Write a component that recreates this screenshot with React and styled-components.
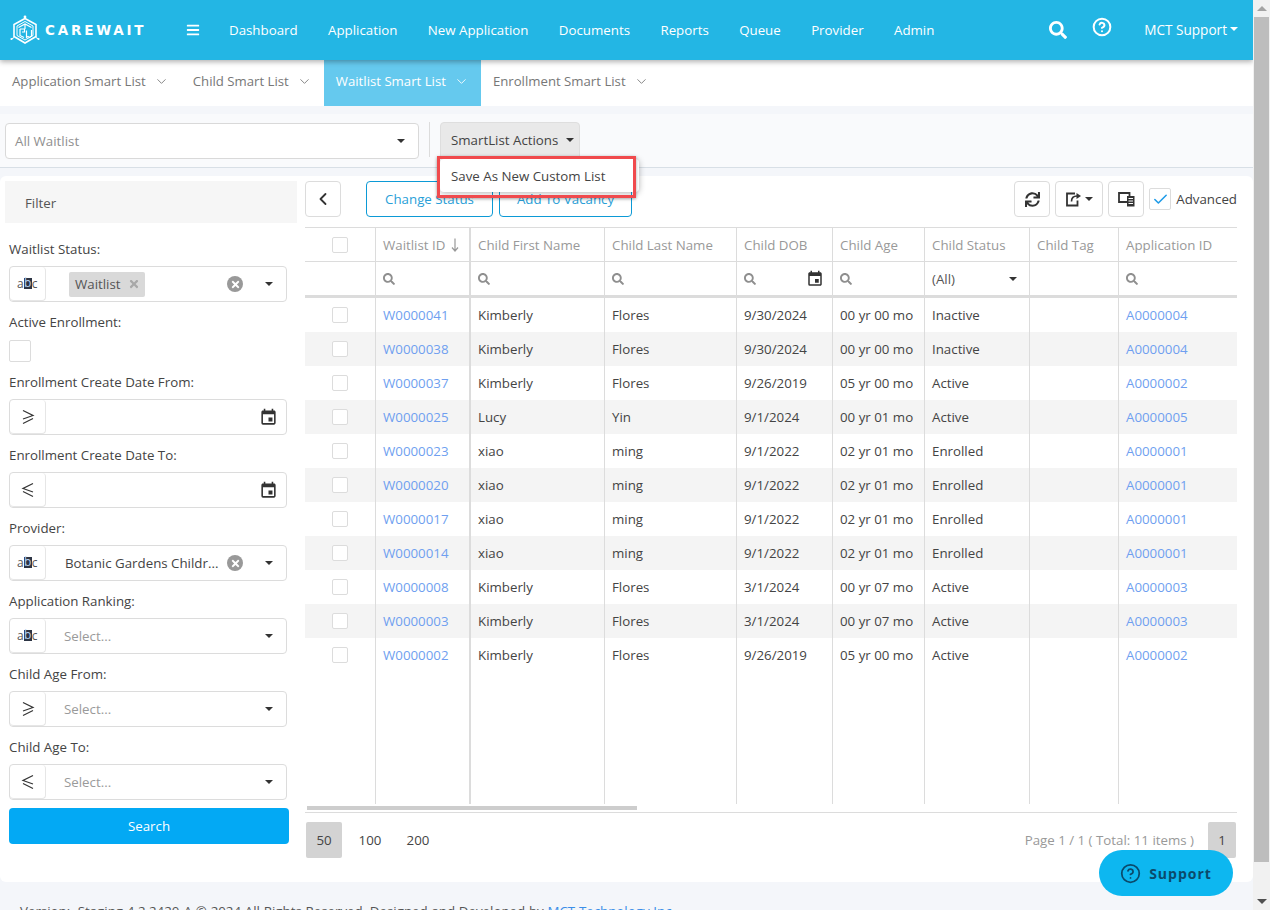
import React from 'react';
import styled, { createGlobalStyle } from 'styled-components';
import { ChevronDown, ChevronLeft, CircleHelp, Check } from 'lucide-react';
import { FaBars, FaSearch, FaSync, FaTimes } from 'react-icons/fa';
import { MdEvent } from 'react-icons/md';

const FONT = '"Open Sans", "Noto Sans", "Liberation Sans", sans-serif';

const Global = createGlobalStyle`
  html, body { margin: 0; padding: 0; height: 910px; overflow: hidden; background: #f4f6fa; }
  * { box-sizing: border-box; }
  body { font-family: ${FONT}; font-size: 13.3px; color: #444; }
`;

const Shell = styled.div`
  position: relative;
  display: flex;
  width: 1270px;
  height: 910px;
  overflow: hidden;
`;
const Page = styled.div`
  width: 1253px;
  height: 910px;
  display: flex;
  flex-direction: column;
  background: #f4f6fa;
  overflow: hidden;
`;
const ScrollTrack = styled.div`
  width: 17px;
  height: 910px;
  background: #f1f1f1;
  display: flex;
  flex-direction: column;
  align-items: center;
`;
const ScrollArrow = styled.div`
  height: 17px;
  width: 100%;
  display: flex;
  align-items: center;
  justify-content: center;
  &::before {
    content: '';
    border-left: 5px solid transparent;
    border-right: 5px solid transparent;
    ${p => (p.$down ? 'border-top: 5px solid #505050;' : 'border-bottom: 5px solid #a3a3a3;')}
  }
`;
const ScrollThumb = styled.div`
  width: 15px;
  height: 845px;
  background: #bdbdbd;
`;
const ScrollSpace = styled.div`
  flex: 1;
`;

const Header = styled.header`
  position: relative;
  z-index: 3;
  height: 60px;
  flex: none;
  background: #23b6e4;
  box-shadow: 0 2px 5px rgba(0, 0, 0, 0.3);
  display: flex;
  align-items: center;
  padding: 0 15px 0 10px;
  color: #fff;
`;
const Logo = styled.div`
  display: flex;
  align-items: center;
  gap: 5px;
  width: 176px;
  flex: none;
`;
const LogoText = styled.span`
  font-family: "DejaVu Sans", sans-serif;
  font-weight: 700;
  font-size: 13.5px;
  letter-spacing: 2.8px;
  white-space: nowrap;
  color: #fff;
`;
const NavList = styled.nav`
  display: flex;
  align-items: center;
  gap: 30.4px;
  margin-left: 29px;
`;
const NavItem = styled.span`
  color: #fff;
  white-space: nowrap;
`;
const HeaderRight = styled.div`
  margin-left: auto;
  display: flex;
  align-items: center;
  color: #fff;
`;
const UserName = styled.span`
  margin: -2px 0 0 32px;
  font-size: 13.6px;
  white-space: nowrap;
  display: flex;
  align-items: center;
  gap: 3px;
`;
const HelpWrap = styled.span`
  display: flex;
  margin: -6px 0 0 25px;
`;
const Caret = styled.span`
  display: inline-block;
  flex: none;
  border-left: 4px solid transparent;
  border-right: 4px solid transparent;
  border-top: 4px solid ${p => p.$color || '#333'};
`;

const Tabs = styled.div`
  height: 46px;
  flex: none;
  background: #fff;
  display: flex;
`;
const Tab = styled.div`
  display: flex;
  align-items: center;
  gap: 8px;
  padding: 0 12px 4px;
  height: 46px;
  font-size: 13.2px;
  white-space: nowrap;
  color: ${p => (p.$active ? '#fff' : '#777')};
  background: ${p => (p.$active ? '#65c9ee' : 'transparent')};
`;

const Band = styled.div`
  height: 8px;
  flex: none;
  background: #f4f6fa;
`;
const Toolbar = styled.div`
  position: relative;
  z-index: 2;
  height: 54px;
  flex: none;
  background: #f9fafc;
  border-bottom: 1px solid #d8dfe6;
  display: flex;
  align-items: flex-start;
  padding: 9px 0 0 5px;
`;
const ListSelect = styled.div`
  width: 414px;
  height: 36px;
  background: #fff;
  border: 1px solid #d9d9d9;
  border-radius: 4px;
  display: flex;
  align-items: center;
  justify-content: space-between;
  padding: 0 13px 0 9px;
  color: #8f8f8f;
`;
const Divider = styled.div`
  width: 1px;
  height: 35px;
  margin: -1px 10px 0 10px;
  background: #dcdcdc;
`;
const ActionsWrap = styled.div`
  position: relative;
  margin-top: -1px;
`;
const ActionsButton = styled.div`
  width: 140px;
  height: 35px;
  background: #e9e9e9;
  border: 1px solid #dedede;
  border-radius: 4px 4px 0 0;
  display: flex;
  align-items: center;
  gap: 8px;
  padding-left: 10px;
  color: #444;
  white-space: nowrap;
`;
const Menu = styled.div`
  position: absolute;
  top: 37px;
  left: 0;
  width: 199px;
  height: 33px;
  background: #fff;
  border-radius: 4px;
  box-shadow: 0 1px 6px rgba(0, 0, 0, 0.3);
  display: flex;
  align-items: center;
  padding-left: 11px;
  color: #444;
  white-space: nowrap;
`;
const Highlight = styled.div`
  position: absolute;
  top: 34px;
  left: -3px;
  width: 199px;
  height: 42px;
  border: 3px solid #f04a4d;
  box-shadow: 0 1px 3px rgba(0, 0, 0, 0.35);
`;

const Main = styled.main`
  height: 706px;
  margin-top: 8px;
  flex: none;
  background: #fff;
  border-radius: 6px;
  display: flex;
`;
const FilterColumn = styled.aside`
  width: 305px;
  flex: none;
  padding: 5px 0 0 5px;
`;
const FilterTitle = styled.div`
  width: 292px;
  height: 42px;
  background: #f6f6f6;
  display: flex;
  align-items: center;
  padding: 1px 0 0 20px;
  color: #555;
  margin-bottom: 6px;
`;
const Group = styled.div`
  padding-left: 4px;
`;
const Label = styled.div`
  height: 37px;
  padding-top: 10px;
  line-height: 20px;
  color: #444;
  white-space: nowrap;
`;
const Field = styled.div`
  width: 278px;
  height: 36px;
  border: 1px solid #dcdcdc;
  border-radius: 4px;
  display: flex;
  align-items: center;
  background: #fff;
`;
const Addon = styled.div`
  width: 36px;
  height: 34px;
  flex: none;
  border: 1px solid #e6e6e6;
  border-top: none;
  border-left: none;
  border-radius: 4px;
  display: flex;
  align-items: center;
  justify-content: center;
  font-size: 12px;
  color: #555;
`;
const AbcText = styled.span`
  display: inline-flex;
  align-items: center;
  line-height: 12px;
  letter-spacing: 0.4px;
`;
const Inverted = styled.span`
  display: inline-block;
  height: 11px;
  line-height: 10px;
  background: #2c3444;
  color: #b9d3f2;
`;
const FieldValue = styled.div`
  flex: 1;
  min-width: 0;
  padding-left: ${p => p.$pad || 19}px;
  color: ${p => (p.$muted ? '#9a9a9a' : '#444')};
  white-space: nowrap;
`;
const Chip = styled.span`
  display: inline-flex;
  align-items: center;
  justify-content: space-between;
  width: 76px;
  height: 25px;
  padding: 0 5px 0 6px;
  background: #d9d9d9;
  border-radius: 2px;
  color: #555;
`;
const ClearButton = styled.span`
  width: 16px;
  height: 16px;
  flex: none;
  border-radius: 50%;
  background: #999;
  color: #fff;
  display: flex;
  align-items: center;
  justify-content: center;
`;
const FieldCaret = styled.span`
  flex: none;
  width: 34px;
  margin-left: 9px;
  display: flex;
  justify-content: center;
`;
const CalendarEnd = styled.span`
  margin-left: auto;
  margin-right: 8px;
  display: flex;
  color: #333;
`;
const BigCheck = styled.div`
  width: 22px;
  height: 22px;
  margin-top: ${p => p.$mt || 0}px;
  margin-left: ${p => p.$ml || 0}px;
  border: 1px solid #dcdcdc;
  border-radius: 2px;
  background: #fff;
  display: flex;
  align-items: center;
  justify-content: center;
  flex: none;
`;
const SearchButton = styled.div`
  width: 280px;
  height: 36px;
  margin: 8px 0 0 4px;
  background: #03a9f4;
  color: #fff;
  border-radius: 4px;
  display: flex;
  align-items: center;
  justify-content: center;
`;

const Content = styled.section`
  width: 932px;
  flex: none;
  padding-top: 5px;
`;
const ActionRow = styled.div`
  height: 36px;
  display: flex;
  align-items: center;
  margin-bottom: 10px;
`;
const IconButton = styled.div`
  width: ${p => p.$w || 36}px;
  height: 36px;
  border: 1px solid #dcdcdc;
  border-radius: 4px;
  display: flex;
  align-items: center;
  justify-content: center;
  gap: 3px;
  color: #333;
  margin-left: ${p => p.$ml || 0}px;
  flex: none;
  background: #fff;
`;
const OutlineButton = styled.div`
  height: 36px;
  width: ${p => p.$w}px;
  margin-left: ${p => p.$ml}px;
  border: 1px solid #0c9ad6;
  border-radius: 4px;
  color: #2a9fd8;
  display: flex;
  align-items: center;
  justify-content: center;
  white-space: nowrap;
`;
const AdvancedLabel = styled.span`
  margin-left: 5px;
  color: #444;
  white-space: nowrap;
`;
const Spacer = styled.div`
  flex: 1;
`;
const TableClip = styled.div`
  width: 932px;
  overflow: hidden;
`;
const Table = styled.table`
  width: 932px;
  table-layout: fixed;
  border-collapse: separate;
  border-spacing: 0;
  border-top: 1px solid #dcdcdc;
`;
const Column = styled.col`
  width: ${p => p.$w}px;
`;
const Th = styled.th`
  height: 34px;
  padding: 0 0 0 7px;
  text-align: left;
  font-weight: 400;
  color: #999;
  white-space: nowrap;
  border-bottom: 1px solid #dcdcdc;
  border-right: ${p => (p.$thick ? '2px solid #dcdcdc' : '1px solid #dcdcdc')};
  &:last-child { border-right: none; }
  ${p => p.$center && 'padding: 0;'}
`;
const HeadInner = styled.div`
  display: flex;
  align-items: center;
  gap: 6px;
`;
const FilterCell = styled.td`
  height: 36px;
  padding: 0 0 0 7px;
  color: #555;
  border-bottom: 3px solid #dcdcdc;
  border-right: ${p => (p.$thick ? '2px solid #dcdcdc' : '1px solid #dcdcdc')};
  &:last-child { border-right: none; }
`;
const FilterInner = styled.div`
  display: flex;
  align-items: center;
  justify-content: space-between;
  padding-right: ${p => p.$pr || 8}px;
`;
const Td = styled.td`
  height: ${p => p.$h || 34}px;
  padding: 0 0 0 7px;
  color: #444;
  white-space: nowrap;
  background: ${p => (p.$zebra ? '#f4f4f4' : '#fff')};
  border-right: ${p => (p.$thick ? '2px solid #dcdcdc' : '1px solid #dcdcdc')};
  &:last-child { border-right: none; }
  ${p => p.$center && 'padding: 0;'}
`;
const Link = styled.span`
  color: #6f9ff0;
`;
const SmallCheck = styled.span`
  display: block;
  margin: 0 auto;
  width: 16px;
  height: 16px;
  border: 1px solid #dcdcdc;
  border-radius: 2px;
  background: #fff;
`;
const HScroll = styled.div`
  width: 330px;
  height: 4px;
  margin: 2px 0 2px 2px;
  background: #cdcdcd;
`;
const Pager = styled.div`
  border-top: 1px solid #dcdcdc;
  padding-top: 9px;
  display: flex;
  align-items: center;
  color: #444;
`;
const PageSize = styled.div`
  height: 36px;
  width: ${p => p.$w}px;
  margin-left: ${p => p.$ml || 0}px;
  display: flex;
  align-items: center;
  justify-content: center;
  border-radius: 2px;
  background: ${p => (p.$on ? '#d3d3d3' : 'transparent')};
`;
const PageInfo = styled.span`
  margin-left: auto;
  color: #999;
  white-space: nowrap;
`;
const PageNumber = styled.div`
  width: 28px;
  height: 36px;
  margin: 0 1px 0 14px;
  background: #d3d3d3;
  border-radius: 2px;
  display: flex;
  align-items: center;
  justify-content: center;
`;
const Footer = styled.footer`
  flex: none;
  padding: 20px 0 0 20px;
  white-space: nowrap;
  word-spacing: 0.3px;
  color: #555;
`;
const FooterLink = styled.span`
  color: #3b8ee8;
`;
const Support = styled.div`
  position: absolute;
  left: 1099px;
  top: 850px;
  width: 134px;
  height: 46px;
  border-radius: 23px;
  background: #0db7f0;
  color: #0b4a6b;
  display: flex;
  align-items: center;
  justify-content: center;
  gap: 8px;
  font-weight: 700;
  font-size: 14px;
  letter-spacing: 1px;
`;

const GeIcon = ({ flip }) => (
  <svg width="14" height="16" viewBox="0 0 14 16" fill="none" stroke="#333" strokeWidth="1.2">
    {flip ? (
      <>
        <path d="M12 1.5 2 6.5 12 10" />
        <path d="M2 9.5 12 14.5" />
      </>
    ) : (
      <>
        <path d="M2 1.5 12 6.5 2 10" />
        <path d="M12 9.5 2 14.5" />
      </>
    )}
  </svg>
);

const AbcIcon = () => (
  <AbcText>a<Inverted>b</Inverted>c</AbcText>
);

const ColumnsIcon = () => (
  <svg width="17" height="16" viewBox="0 0 17 16">
    <path d="M1 2h10.5v9H1z" fill="none" stroke="#333" strokeWidth="1.8" />
    <path d="M9 5h7.5v10.5H9z" fill="#333" />
    <path d="M10.5 7.5h4.5M10.5 10h4.5M10.5 12.5h4.5" stroke="#fff" strokeWidth="1" />
  </svg>
);

const ExportIcon = () => (
  <svg width="17" height="16" viewBox="0 0 17 16" fill="none" stroke="#333">
    <path d="M10 2.5H2V14.5H12.5V9.5" strokeWidth="1.8" />
    <path d="M6.5 10.5C6.5 7 8.5 5 12 5" strokeWidth="1.6" />
    <path d="M11.5 2 16 5 11.5 8Z" fill="#333" stroke="none" />
  </svg>
);

const SortDown = () => (
  <svg width="8" height="14" viewBox="0 0 8 14" fill="none" stroke="#999" strokeWidth="1.2">
    <path d="M4 0.5V13M1 9.5 4 13 7 9.5" />
  </svg>
);

const LogoMark = () => (
  <svg width="30" height="30" viewBox="0 0 30 30" fill="none" stroke="#fff">
    <path d="M15 3.5 26 9.5V21.5L15 28 4 21.5V9.5Z" strokeWidth="1.6" />
    <path d="M15 6.5 23 11V20.5L15 25 7 20.5V11Z" strokeWidth="1" />
    <path d="M8.5 12.5 15 9l6.5 3.5M15 9v5M10 14v6.5l4 2M10 14h4.5v3h-2.5M16.5 15.5v7l1.5-1 1.5 1 2-1.5v-6" strokeWidth="1.2" />
    <circle cx="15" cy="2" r="1.4" fill="#fff" stroke="none" />
    <circle cx="1.5" cy="24" r="1.1" fill="#fff" stroke="none" />
    <circle cx="28.5" cy="24" r="1.1" fill="#fff" stroke="none" />
    <path d="M1.5 24 4 22.5M28.5 24 26 22.5" strokeWidth="1" />
  </svg>
);

const navItems = ['Dashboard', 'Application', 'New Application', 'Documents', 'Reports', 'Queue', 'Provider', 'Admin'];
const tabs = ['Application Smart List', 'Child Smart List', 'Waitlist Smart List', 'Enrollment Smart List'];
const colWidths = [71, 95, 134, 132, 96, 92, 105, 89, 118];
const rows = [
  ['W0000041', 'Kimberly', 'Flores', '9/30/2024', '00 yr 00 mo', 'Inactive', 'A0000004'],
  ['W0000038', 'Kimberly', 'Flores', '9/30/2024', '00 yr 00 mo', 'Inactive', 'A0000004'],
  ['W0000037', 'Kimberly', 'Flores', '9/26/2019', '05 yr 00 mo', 'Active', 'A0000002'],
  ['W0000025', 'Lucy', 'Yin', '9/1/2024', '00 yr 01 mo', 'Active', 'A0000005'],
  ['W0000023', 'xiao', 'ming', '9/1/2022', '02 yr 01 mo', 'Enrolled', 'A0000001'],
  ['W0000020', 'xiao', 'ming', '9/1/2022', '02 yr 01 mo', 'Enrolled', 'A0000001'],
  ['W0000017', 'xiao', 'ming', '9/1/2022', '02 yr 01 mo', 'Enrolled', 'A0000001'],
  ['W0000014', 'xiao', 'ming', '9/1/2022', '02 yr 01 mo', 'Enrolled', 'A0000001'],
  ['W0000008', 'Kimberly', 'Flores', '3/1/2024', '00 yr 07 mo', 'Active', 'A0000003'],
  ['W0000003', 'Kimberly', 'Flores', '3/1/2024', '00 yr 07 mo', 'Active', 'A0000003'],
  ['W0000002', 'Kimberly', 'Flores', '9/26/2019', '05 yr 00 mo', 'Active', 'A0000002'],
];
const heads = ['Child First Name', 'Child Last Name', 'Child DOB', 'Child Age', 'Child Status', 'Child Tag', 'Application ID'];

const Lens = () => <FaSearch size={12} color="#8f8f8f" />;

const SelectField = ({ icon, placeholder }) => (
  <Field>
    <Addon>{icon}</Addon>
    <FieldValue $muted $pad={18}>{placeholder}</FieldValue>
    <FieldCaret><Caret /></FieldCaret>
  </Field>
);
const DateField = ({ flip }) => (
  <Field>
    <Addon><GeIcon flip={flip} /></Addon>
    <CalendarEnd><MdEvent size={19} /></CalendarEnd>
  </Field>
);
const Clear = () => (
  <ClearButton><FaTimes size={11} /></ClearButton>
);

export default function App() {
  return (
    <Shell>
      <Global />
      <Page>
        <Header>
          <Logo>
            <LogoMark />
            <LogoText>CAREWAIT</LogoText>
          </Logo>
          <FaBars size={14} />
          <NavList>
            {navItems.map(n => <NavItem key={n}>{n}</NavItem>)}
          </NavList>
          <HeaderRight>
            <FaSearch size={18} />
            <HelpWrap><CircleHelp size={20} strokeWidth={2.4} /></HelpWrap>
            <UserName>MCT Support <Caret $color="#fff" /></UserName>
          </HeaderRight>
        </Header>
        <Tabs>
          {tabs.map((t, i) => (
            <Tab key={t} $active={i === 2}>
              {t}
              <ChevronDown size={15} strokeWidth={1.4} />
            </Tab>
          ))}
        </Tabs>
        <Band />
        <Toolbar>
          <ListSelect>
            All Waitlist
            <Caret />
          </ListSelect>
          <Divider />
          <ActionsWrap>
            <ActionsButton>SmartList Actions <Caret /></ActionsButton>
            <Menu>Save As New Custom List</Menu>
            <Highlight />
          </ActionsWrap>
        </Toolbar>
        <Main>
          <FilterColumn>
            <FilterTitle>Filter</FilterTitle>
            <Group>
              <Label>Waitlist Status:</Label>
              <Field>
                <Addon><AbcIcon /></Addon>
                <FieldValue $pad={23}>
                  <Chip>Waitlist <FaTimes size={12} color="#a8a8a8" /></Chip>
                </FieldValue>
                <Clear />
                <FieldCaret><Caret /></FieldCaret>
              </Field>
            </Group>
            <Group>
              <Label>Active Enrollment:</Label>
              <BigCheck $mt={1} />
            </Group>
            <Group>
              <Label>Enrollment Create Date From:</Label>
              <DateField />
            </Group>
            <Group>
              <Label>Enrollment Create Date To:</Label>
              <DateField flip />
            </Group>
            <Group>
              <Label>Provider:</Label>
              <Field>
                <Addon><AbcIcon /></Addon>
                <FieldValue>Botanic Gardens Childr...</FieldValue>
                <Clear />
                <FieldCaret><Caret /></FieldCaret>
              </Field>
            </Group>
            <Group>
              <Label>Application Ranking:</Label>
              <SelectField icon={<AbcIcon />} placeholder="Select..." />
            </Group>
            <Group>
              <Label>Child Age From:</Label>
              <SelectField icon={<GeIcon />} placeholder="Select..." />
            </Group>
            <Group>
              <Label>Child Age To:</Label>
              <SelectField icon={<GeIcon flip />} placeholder="Select..." />
            </Group>
            <SearchButton>Search</SearchButton>
          </FilterColumn>
          <Content>
            <ActionRow>
              <IconButton><ChevronLeft size={20} strokeWidth={2.2} /></IconButton>
              <OutlineButton $w={127} $ml={25}>Change Status</OutlineButton>
              <OutlineButton $w={133} $ml={6}>Add To Vacancy</OutlineButton>
              <Spacer />
              <IconButton><FaSync size={15} /></IconButton>
              <IconButton $w={48} $ml={5}><ExportIcon /><Caret /></IconButton>
              <IconButton $ml={5}><ColumnsIcon /></IconButton>
              <BigCheck $ml={5}><Check size={17} strokeWidth={2.2} color="#1e9be8" /></BigCheck>
              <AdvancedLabel>Advanced</AdvancedLabel>
            </ActionRow>
            <TableClip>
              <Table>
                <colgroup>
                  {colWidths.map((w, i) => <Column key={i} $w={w} />)}
                </colgroup>
                <thead>
                  <tr>
                    <Th $center><SmallCheck /></Th>
                    <Th $thick><HeadInner>Waitlist ID<SortDown /></HeadInner></Th>
                    {heads.map(h => <Th key={h}>{h}</Th>)}
                  </tr>
                  <tr>
                    <FilterCell />
                    <FilterCell $thick><FilterInner><Lens /></FilterInner></FilterCell>
                    <FilterCell><FilterInner><Lens /></FilterInner></FilterCell>
                    <FilterCell><FilterInner><Lens /></FilterInner></FilterCell>
                    <FilterCell><FilterInner><Lens /><MdEvent size={18} color="#333" /></FilterInner></FilterCell>
                    <FilterCell><FilterInner><Lens /></FilterInner></FilterCell>
                    <FilterCell><FilterInner $pr={12}>(All)<Caret /></FilterInner></FilterCell>
                    <FilterCell />
                    <FilterCell><FilterInner><Lens /></FilterInner></FilterCell>
                  </tr>
                </thead>
                <tbody>
                  {rows.map((r, i) => {
                    const z = i % 2 === 1;
                    return (
                      <tr key={r[0]}>
                        <Td $center $zebra={z}><SmallCheck /></Td>
                        <Td $thick $zebra={z}><Link>{r[0]}</Link></Td>
                        <Td $zebra={z}>{r[1]}</Td>
                        <Td $zebra={z}>{r[2]}</Td>
                        <Td $zebra={z}>{r[3]}</Td>
                        <Td $zebra={z}>{r[4]}</Td>
                        <Td $zebra={z}>{r[5]}</Td>
                        <Td $zebra={z} />
                        <Td $zebra={z}><Link>{r[6]}</Link></Td>
                      </tr>
                    );
                  })}
                  <tr>
                    {colWidths.map((w, i) => <Td key={i} $h={132} $thick={i === 1} />)}
                  </tr>
                </tbody>
              </Table>
            </TableClip>
            <HScroll />
            <Pager>
              <PageSize $on $w={36} $ml={1}>50</PageSize>
              <PageSize $w={36} $ml={10}>100</PageSize>
              <PageSize $w={36} $ml={12}>200</PageSize>
              <PageInfo>Page 1 / 1 ( Total: 11 items )</PageInfo>
              <PageNumber>1</PageNumber>
            </Pager>
          </Content>
        </Main>
        <Footer>
          Version:&nbsp; Staging 4.2.2420-A © 2024 All Rights Reserved. Designed and Developed by <FooterLink>MCT Technology Inc.</FooterLink>
        </Footer>
      </Page>
      <ScrollTrack>
        <ScrollArrow />
        <ScrollThumb />
        <ScrollSpace />
        <ScrollArrow $down />
      </ScrollTrack>
      <Support><CircleHelp size={21} strokeWidth={2} />Support</Support>
    </Shell>
  );
}
